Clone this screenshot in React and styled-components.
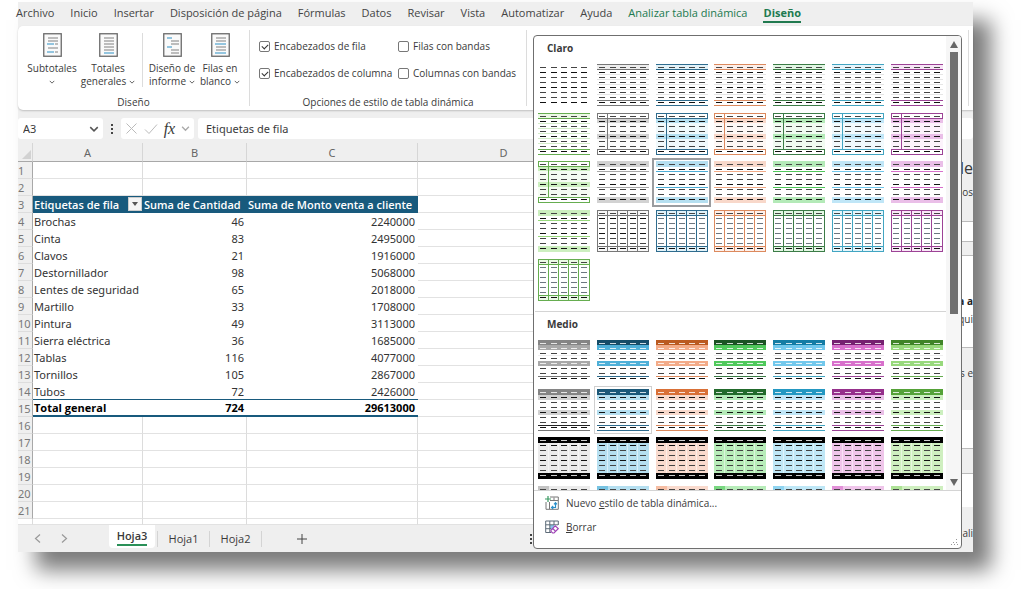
import React, { useState } from "react";
import styled, { createGlobalStyle, css } from "styled-components";

const GlobalStyle = createGlobalStyle`
    * {
        box-sizing: border-box;
    }

    body {
        margin: 0;
        background: #fff;
        color: #3a3a3a;
        font-family: "Open Sans", "Noto Sans", sans-serif;
        font-size: 10px;
    }

    button, input {
        font: inherit;
        color: inherit;
    }

    button {
        background: none;
        border: none;
        padding: 0;
    }
`;

const Page = styled.div`
    display: flex;
    min-height: 100vh;
    padding: 2px 51px 37px 18px;
    overflow: hidden;
`;

const Window = styled.div`
    position: relative;
    flex: 1;
    min-width: 0;
    display: flex;
    flex-direction: column;
    background: #efefef;
    box-shadow: 18px 18px 20px rgba(0, 0, 0, 0.52);
`;

/* Pestañas de la cinta */
const TabBar = styled.nav`
    display: flex;
    gap: 16px;
    height: 24px;
    margin-left: -2px;
    white-space: nowrap;
`;

const RibbonTab = styled.a`
    font-size: 11px;
    line-height: 20px;
    height: 21px;
    padding-top: 1px;
    text-decoration: none;
    color: ${({ $green }) => ($green ? "#217a50" : "#444")};
    ${({ $active }) =>
        $active &&
        css`
            font-weight: 700;
            border-bottom: 2px solid #217a50;
        `}
`;

const Ribbon = styled.div`
    display: flex;
    height: 84px;
    padding: 4px 0;
    background: #fff;
    border-radius: 5px 0 0 5px;
    box-shadow: 0 1px 2px rgba(0, 0, 0, 0.2);
`;

const Group = styled.section`
    display: flex;
    flex-direction: column;
    justify-content: space-between;
    width: ${({ $width }) => $width};
    flex: ${({ $grow }) => ($grow ? "1" : "none")};
    border-right: 1px solid #dcdcdc;
    margin-right: ${({ $grow }) => ($grow ? "4px" : "0")};
`;

const GroupBody = styled.div`
    display: flex;
    padding: 3px 5px 0 6px;
`;

const GroupLabel = styled.div`
    text-align: center;
    line-height: 14px;
    margin-bottom: -3px;
`;

const BigButton = styled.button`
    display: flex;
    flex-direction: column;
    align-items: center;
    width: ${({ $wide }) => ($wide ? "56px" : "48px")};
    line-height: 13px;
    white-space: nowrap;

    > svg {
        margin-bottom: 5px;
    }
`;

const ButtonLine = styled.span`
    display: flex;
    align-items: center;
    gap: 3px;
    height: 13px;
`;

const Divider = styled.span`
    width: 1px;
    height: 54px;
    margin: 0 5px 0 6px;
    background: #dcdcdc;
`;

const Options = styled.div`
    display: grid;
    grid-template-columns: 139px auto;
    row-gap: 13px;
    padding: 9px 0 0 9px;
`;

const Option = styled.label`
    display: flex;
    align-items: center;
    gap: 4px;
    line-height: 14px;
    white-space: nowrap;
`;

const Check = styled.input`
    appearance: none;
    width: 11px;
    height: 11px;
    margin: 0;
    border: 1px solid #777;
    border-radius: 2px;
    display: grid;
    place-items: center;

    &:checked::before {
        content: "";
        width: 5px;
        height: 3px;
        margin-bottom: 1px;
        border-left: 1px solid #333;
        border-bottom: 1px solid #333;
        transform: rotate(-45deg);
    }
`;

/* Barra de fórmulas */
const FormulaBar = styled.div`
    display: flex;
    gap: 4px;
    padding: 8px 0 4px;
`;

const Field = styled.div`
    display: flex;
    align-items: center;
    justify-content: space-between;
    height: 21px;
    padding: 0 4px;
    background: #fff;
    border-radius: 3px;
    width: ${({ $width }) => $width || "auto"};
    flex: ${({ $grow }) => ($grow ? "1" : "none")};
    min-width: 0;
`;

const FieldInput = styled.input`
    flex: 1;
    min-width: 0;
    border: none;
    background: none;
    padding: 0 0 0 ${({ $indent }) => ($indent ? "4px" : "1px")};
    font-family: "Noto Sans", sans-serif;
    font-size: 11px;
    outline: none;
`;

const Fx = styled.button`
    font: italic 16px/20px "Liberation Serif", serif;
`;

const Dots = styled.span`
    align-self: center;
    width: 10px;
    display: flex;
    justify-content: center;
`;

/* Hoja */
const Workspace = styled.div`
    display: flex;
    flex: 1;
    min-height: 0;
`;

const SheetColumn = styled.div`
    flex: 1;
    min-width: 0;
    display: flex;
    flex-direction: column;
`;

const Sheet = styled.table`
    width: 100%;
    table-layout: fixed;
    border-collapse: separate;
    border-spacing: 0;
    font-family: "Noto Sans", sans-serif;
    font-size: 11px;
    background: #fff;
`;

const ColHead = styled.th`
    height: 19px;
    padding: 0;
    font-weight: 400;
    color: #666;
    background: #efefef;
    border-right: 1px solid #d6d6d6;
    border-bottom: 1px solid #a8a8a8;
    text-align: ${({ $corner }) => ($corner ? "right" : "center")};
    vertical-align: ${({ $corner }) => ($corner ? "bottom" : "middle")};
    line-height: 1;
`;

const RowHead = styled.th`
    height: 17px;
    padding: 0;
    overflow: hidden;
    font-weight: 400;
    line-height: 15px;
    text-align: left;
    color: #777;
    background: #efefef;
    border-right: 1px solid #a8a8a8;
    border-bottom: 1px solid #ddd;
`;

const Cell = styled.td`
    height: ${({ $partial }) => ($partial ? "6px" : "17px")};
    padding: 0 2px 0 1px;
    line-height: 15px;
    white-space: nowrap;
    color: #333;
    text-align: ${({ $number }) => ($number ? "right" : "left")};
    border-right: 1px solid #dcdcdc;
    border-bottom: 1px solid #e2e2e2;
    ${({ $kind }) =>
        $kind === "data" &&
        css`
            border-color: #fff;
        `}
    ${({ $kind }) =>
        $kind === "head" &&
        css`
            background: #185a7d;
            border-color: #185a7d;
            color: #fff;
            font-family: "Open Sans", sans-serif;
            font-weight: 600;
            padding-right: 0;
        `}
    ${({ $kind }) =>
        $kind === "last" &&
        css`
            border-right: none;
            padding-right: 3px;
            border-bottom-color: #185a7d;
        `}
    ${({ $kind }) =>
        $kind === "total" &&
        css`
            border-right: none;
            padding-right: 3px;
            border-bottom: 2px solid #185a7d;
            color: #000;
            font-family: "Open Sans", sans-serif;
            font-weight: 700;
        `}
`;

const HeadContent = styled.div`
    display: flex;
    align-items: center;
    justify-content: space-between;
    height: 15px;
`;

const FilterButton = styled.button`
    display: grid;
    place-items: center;
    width: 14px;
    height: 14px;
    background: #f4f4f4;
    border: 1px solid #ccc;
`;

const SheetTabs = styled.div`
    display: flex;
    align-items: stretch;
    height: 27px;
    margin-top: auto;
    font-size: 11px;
`;

const NavButtons = styled.div`
    display: flex;
    align-items: center;
    gap: 16px;
    width: 91px;
    padding-left: 14px;
`;

const SheetTab = styled.button`
    display: flex;
    align-items: center;
    justify-content: center;
    width: ${({ $active }) => ($active ? "46px" : "51px")};
    margin-right: ${({ $active }) => ($active ? "2px" : "0")};
    margin-bottom: ${({ $active }) => ($active ? "4px" : "0")};
    background: ${({ $active }) => ($active ? "#fff" : "none")};
    border-radius: 0 0 4px 4px;
    font-weight: ${({ $active }) => ($active ? "600" : "400")};

    span {
        line-height: 16px;
        border-bottom: ${({ $active }) => ($active ? "2px solid #2a9058" : "none")};
    }
`;

const TabRule = styled.span`
    width: 1px;
    margin: 6px 0 5px;
    background: #d4d4d4;
`;

const AddSheet = styled.button`
    width: 80px;
    margin-right: auto;
    display: grid;
    place-items: center;
`;

const TabDots = styled.div`
    flex: 1;
    display: flex;
    align-items: center;
    padding-left: 188px;
`;

/* Panel lateral, casi oculto bajo la galería */
const SidePane = styled.aside`
    width: 32px;
    text-align: right;
    white-space: nowrap;
`;

const PaneBlock = styled.div`
    height: ${({ $height }) => $height};
    padding-top: ${({ $top }) => $top || "0"};
    background: ${({ $white }) => ($white ? "#fff" : "#efefef")};
    border-bottom: 1px solid ${({ $line }) => ($line ? "#bbb" : "transparent")};
    font-size: 10px;
    line-height: 18px;
`;

const PaneTitle = styled.div`
    font-size: 16px;
    line-height: 30px;
`;

const Strong = styled.strong`
    display: block;
    color: #222;
`;

/* Galería de estilos */
const Gallery = styled.div`
    position: absolute;
    top: 33px;
    right: 11px;
    bottom: 3px;
    width: 429px;
    display: flex;
    flex-direction: column;
    background: #fff;
    border: 1px solid #6f6f6f;
    border-radius: 4px;
    overflow: hidden;
`;

const GalleryScroll = styled.div`
    display: flex;
    flex: 1;
    min-height: 0;
    border-bottom: 1px solid #d4d4d4;
`;

const GalleryList = styled.div`
    flex: 1;
    overflow: hidden;
    padding-left: 1px;
`;

const GallerySection = styled.section`
    padding-bottom: 7px;
    border-bottom: 1px solid #d4d4d4;
`;

const SectionTitle = styled.h2`
    margin: 0;
    padding-left: 12px;
    font-size: 10px;
    font-weight: 700;
    line-height: 25px;
`;

const StyleGrid = styled.div`
    display: grid;
    grid-template-columns: repeat(7, 1fr);
    grid-auto-rows: 1fr;
    height: ${({ $height }) => $height};
`;

const StyleButton = styled.button`
    display: grid;
    place-items: center;
    border: ${({ $state }) =>
        $state === "selected"
            ? "2px solid #9a9c9f"
            : $state === "hover"
              ? "1px solid #cfcfcf"
              : "1px solid transparent"};
`;

const ScrollTrack = styled.div`
    width: 15px;
    display: flex;
    flex-direction: column;
    align-items: center;
    padding: 5px 0 4px;
    background: #f6f6f6;
`;

const ScrollThumb = styled.div`
    width: 8px;
    height: 262px;
    margin: 4px 0 auto;
    background: #707070;
`;

const GalleryMenu = styled.div`
    display: flex;
    flex-direction: column;
    height: 57px;
    padding: 0 11px;
`;

const MenuItem = styled.button`
    display: flex;
    align-items: center;
    gap: 7px;
    height: 24px;

    u {
        text-underline-offset: 1px;
    }
`;

const Grip = styled.svg`
    position: absolute;
    right: 2px;
    bottom: 2px;
`;

const TABS = [
    "Archivo", "Inicio", "Insertar", "Disposición de página", "Fórmulas", "Datos",
    "Revisar", "Vista", "Automatizar", "Ayuda", "Analizar tabla dinámica", "Diseño",
];

const ROWS = [
    ["Brochas", 46, 2240000],
    ["Cinta", 83, 2495000],
    ["Clavos", 21, 1916000],
    ["Destornillador", 98, 5068000],
    ["Lentes de seguridad", 65, 2018000],
    ["Martillo", 33, 1708000],
    ["Pintura", 49, 3113000],
    ["Sierra eléctrica", 36, 1685000],
    ["Tablas", 116, 4077000],
    ["Tornillos", 105, 2867000],
    ["Tubos", 72, 2426000],
];

// dark: encabezado, mid: banda, pale: relleno, line: bordes
const PALETTE = [
    { dark: "#858585", mid: "#a9a9a9", pale: "#d2d2d2", soft: "#ebebeb", line: "#777" },
    { dark: "#1c5878", mid: "#4fb0d8", pale: "#b5dff0", soft: "#b5dff0", line: "#2f6c8e" },
    { dark: "#d97037", mid: "#f3ab88", pale: "#f8d8ca", soft: "#f9dacd", line: "#dc8a5e" },
    { dark: "#226a2c", mid: "#50c95c", pale: "#b4eab8", soft: "#b7ecb9", line: "#3c7c47" },
    { dark: "#2498c2", mid: "#72c8ec", pale: "#c0e6f7", soft: "#bfe7f6", line: "#42a5c2" },
    { dark: "#96308c", mid: "#d870cc", pale: "#eabfe8", soft: "#efc5ea", line: "#9c4396" },
    { dark: "#55a238", mid: "#98d97c", pale: "#ccefbf", soft: "#cfefc0", line: "#66ad50" },
];
const HEAD_DARK = ["#858585", "#154c68", "#bb5a20", "#1b5324", "#147ca4", "#762070", "#408528"];

const DASH_Y = [3, 8, 13, 18, 23, 28, 33, 38];
const DASH_X = [2, 13, 23, 33, 43];

function Dashes({ light = [], tint }) {
    return DASH_Y.map((y, r) =>
        DASH_X.map((x) => (
            <rect
                key={`${r}-${x}`}
                x={x}
                y={y}
                width="6"
                height="1"
                fill={light.includes(r) ? "#ffffffcc" : tint && r > 0 && r < 7 ? tint : r % 3 === 1 ? "#111" : "#444"}
            />
        ))
    );
}

function Thumb({ kind, c }) {
    const p = PALETTE[c];
    const fill = (y, h, color) => <rect x="0" y={y} width="52" height={h} fill={color} />;
    const hline = (y, color = p.line) => <rect x="0" y={y} width="52" height="1" fill={color} />;
    return (
        <svg width="52" height="42" viewBox="0 0 52 42" shapeRendering="crispEdges" aria-hidden="true">
            {kind === "plain" && <Dashes />}
            {kind === "lines" && (
                <>
                    {fill(0, 6, p.pale + "66")}
                    {[10, 15, 20, 25, 30].map((y) => (
                        <g key={y}>{hline(y, c === 6 ? "#d3ecc8" : "#e6e6e6")}</g>
                    ))}
                    {hline(0)}
                    {hline(5)}
                    {hline(36)}
                    {hline(41)}
                    <Dashes />
                </>
            )}
            {kind === "boxed" && (
                <>
                    {fill(6, 30, p.soft + "33")}
                    {fill(6, 4, p.pale)}
                    {fill(21, 5, p.pale)}
                    <Dashes />
                    <g fill="none" stroke={p.line}>
                        <rect x="0.5" y="0.5" width="51" height="5" />
                        <rect x="0.5" y="36.5" width="51" height="5" />
                        <path d="M10.5 0V36" />
                    </g>
                </>
            )}
            {kind === "bands" && (
                <>
                    {fill(0, 6, p.pale)}
                    {fill(36, 6, p.pale)}
                    {hline(10, p.mid)}
                    {hline(26, p.mid)}
                    <Dashes />
                </>
            )}
            {kind === "grid" && (
                <>
                    {fill(0, 6, p.soft + "66")}
                    {fill(36, 6, p.soft + "66")}
                    <Dashes tint={c === 0 ? undefined : "#6c7780"} />
                    <g fill="none" stroke={p.line}>
                        <rect x="0.5" y="0.5" width="51" height="41" />
                        <path d="M0 5.5H52M0 36.5H52M10.5 0V42M20.5 0V42M30.5 0V42M40.5 0V42" />
                    </g>
                </>
            )}
            {kind === "strong" && (
                <>
                    {fill(0, 5, HEAD_DARK[c])}
                    {fill(5, 5, p.mid)}
                    {fill(21, 5, p.mid)}
                    {hline(15, "#eee")}
                    {hline(36)}
                    <Dashes light={[0, 1, 4]} />
                </>
            )}
            {kind === "medium" && (
                <>
                    {fill(0, 6, p.dark)}
                    {fill(6, 5, p.pale)}
                    {fill(21, 5, p.pale)}
                    {hline(36, c === 0 ? "#222" : p.line)}
                    {hline(41)}
                    <Dashes light={[0]} />
                </>
            )}
            {kind === "black" && (
                <>
                    {fill(0, 42, p.soft)}
                    <path d="M10.5 0V42M20.5 0V42M30.5 0V42M40.5 0V42" stroke="#fff" strokeOpacity="0.5" />
                    {fill(0, 6, "#000")}
                    {fill(36, 6, "#000")}
                    <Dashes light={[0, 7]} />
                </>
            )}
            {kind === "tinted" && (
                <>
                    {fill(0, 42, p.soft)}
                    <rect x="0" y="0" width="11" height="42" fill={p.mid} fillOpacity="0.6" />
                    <Dashes />
                </>
            )}
        </svg>
    );
}

const series = (kind) => PALETTE.map((_, c) => ({ kind, c }));
const LIGHT = [{ kind: "plain", c: 0 }, ...series("lines"), ...series("boxed"), ...series("bands"), ...series("grid")];
const MEDIUM = [...series("strong"), ...series("medium"), ...series("black"), ...series("tinted")];

const Chevron = ({ size = 6, color = "#555" }) => (
    <svg width={size} height={size} viewBox="0 0 8 8" fill="none" stroke={color} strokeWidth="1.2" aria-hidden="true">
        <path d="M1 2.5 4 5.5 7 2.5" />
    </svg>
);

// Cada línea: [y, x1, x2, azul]
const DOC_LINES = {
    subtotals: [[5, 5, 15], [8, 5, 15], [11, 4, 11, true], [11, 12, 15], [15, 5, 15], [19, 4, 11, true], [19, 12, 15]],
    totals: [[5, 5, 15], [8, 5, 15], [11, 5, 15], [14, 5, 15], [17, 5, 15], [20, 5, 15, true]],
    report: [[5, 4, 9, true], [8, 8, 16], [11, 8, 16], [14, 4, 9, true], [17, 8, 16], [20, 8, 16]],
    blank: [[5, 5, 15], [8, 5, 15], [11, 4, 15, true], [14, 5, 15], [17, 5, 15], [20, 4, 15, true]],
};

function DocIcon({ type }) {
    return (
        <svg width="19" height="24" viewBox="0 0 19 24" fill="none" aria-hidden="true">
            <rect x="0.75" y="0.75" width="17.5" height="22.5" fill="#fafafa" stroke="#6a6a6a" strokeWidth="1.3" />
            {DOC_LINES[type].map(([y, a, b, blue], i) => (
                <path key={i} d={`M${a} ${y}H${b}`} stroke={blue ? "#3f9ac9" : "#8a8a8a"} strokeWidth="1.1" />
            ))}
        </svg>
    );
}

const DotsIcon = () => (
    <svg width="2" height="10" viewBox="0 0 2 10" fill="#444" aria-hidden="true">
        <path d="M0 0H2V2H0ZM0 4H2V6H0ZM0 8H2V10H0Z" />
    </svg>
);

const Arrow = ({ up }) => (
    <svg width="8" height="7" viewBox="0 0 8 7" fill="#666" aria-hidden="true">
        <path d={up ? "M4 0 8 7H0Z" : "M0 0H8L4 7Z"} />
    </svg>
);

const BIG_BUTTONS = [
    { icon: "subtotals", top: "Subtotales", bottom: "", wide: true },
    { icon: "totals", top: "Totales", bottom: "generales", wide: true },
    { icon: "report", top: "Diseño de", bottom: "informe" },
    { icon: "blank", top: "Filas en", bottom: "blanco" },
];

function RibbonPanel() {
    const [options, setOptions] = useState([
        ["Encabezados de fila", true],
        ["Filas con bandas", false],
        ["Encabezados de columna", true],
        ["Columnas con bandas", false],
    ]);

    const toggle = (index) =>
        setOptions(options.map(([name, on], i) => [name, i === index ? !on : on]));

    return (
        <Ribbon>
            <Group $width="232px">
                <GroupBody>
                    {BIG_BUTTONS.map((b, i) => (
                        <React.Fragment key={b.icon}>
                            {i === 2 && <Divider />}
                            <BigButton $wide={b.wide}>
                                <DocIcon type={b.icon} />
                                <ButtonLine>{b.top}</ButtonLine>
                                <ButtonLine>
                                    {b.bottom}
                                    <Chevron />
                                </ButtonLine>
                            </BigButton>
                        </React.Fragment>
                    ))}
                </GroupBody>
                <GroupLabel>Diseño</GroupLabel>
            </Group>
            <Group $width="277px">
                <Options>
                    {options.map(([name, on], i) => (
                        <Option key={name}>
                            <Check type="checkbox" checked={on} onChange={() => toggle(i)} />
                            {name}
                        </Option>
                    ))}
                </Options>
                <GroupLabel>Opciones de estilo de tabla dinámica</GroupLabel>
            </Group>
            <Group $grow />
        </Ribbon>
    );
}

function SheetRow({ n }) {
    if (n === 3) {
        return (
            <tr>
                <RowHead scope="row">3</RowHead>
                <Cell $kind="head">
                    <HeadContent>
                        Etiquetas de fila
                        <FilterButton aria-label="Filtrar">
                            <svg width="6" height="4" viewBox="0 0 6 4" fill="#555">
                                <path d="M0 0H6L3 4Z" />
                            </svg>
                        </FilterButton>
                    </HeadContent>
                </Cell>
                <Cell $kind="head">Suma de Cantidad</Cell>
                <Cell $kind="head">Suma de Monto venta a cliente</Cell>
                <Cell />
                <Cell />
            </tr>
        );
    }
    const row = n === 15 ? ["Total general", 724, 29613000] : ROWS[n - 4] || ["", "", ""];
    const kind = n === 15 ? "total" : n === 14 ? "last" : n > 3 && n < 14 ? "data" : undefined;
    return (
        <tr>
            <RowHead scope="row">{n}</RowHead>
            <Cell $kind={kind}>{row[0]}</Cell>
            <Cell $kind={kind} $number>{row[1]}</Cell>
            <Cell $kind={kind} $number>{row[2]}</Cell>
            <Cell />
            <Cell />
        </tr>
    );
}

function StyleGallery() {
    return (
        <Gallery>
            <GalleryScroll>
                <GalleryList>
                    <GallerySection>
                        <SectionTitle>Claro</SectionTitle>
                        <StyleGrid $height="243px">
                            {LIGHT.map((s, i) => (
                                <StyleButton key={i} aria-label={`Claro ${i}`} $state={i === 16 ? "selected" : ""}>
                                    <Thumb {...s} />
                                </StyleButton>
                            ))}
                        </StyleGrid>
                    </GallerySection>
                    <GallerySection>
                        <SectionTitle>Medio</SectionTitle>
                        <StyleGrid $height="194px">
                            {MEDIUM.map((s, i) => (
                                <StyleButton key={i} aria-label={`Medio ${i + 1}`} $state={i === 8 ? "hover" : ""}>
                                    <Thumb {...s} />
                                </StyleButton>
                            ))}
                        </StyleGrid>
                    </GallerySection>
                </GalleryList>
                <ScrollTrack>
                    <Arrow up />
                    <ScrollThumb />
                    <Arrow />
                </ScrollTrack>
            </GalleryScroll>
            <GalleryMenu>
                <MenuItem>
                    <svg width="14" height="14" viewBox="0 0 14 14" fill="none" aria-hidden="true">
                        <path d="M5 1H13.3V13.3H1V6M5 4.5H13M4.5 6V13M9 1.5V4" stroke="#777" />
                        <path d="M3 0V6M0 3H6" stroke="#3a9a62" strokeWidth="1.2" />
                        <path d="M7 11.5H10.5V7M9 8.3 10.5 6.7 12 8.3M8.2 10 6.6 11.5 8.2 13" stroke="#2a8fc9" strokeWidth="1.2" />
                    </svg>
                    <span>Nuevo <u>e</u>stilo de tabla dinámica...</span>
                </MenuItem>
                <MenuItem>
                    <svg width="14" height="14" viewBox="0 0 14 14" fill="none" aria-hidden="true">
                        <rect x="5" y="5" width="4" height="4" fill="#8cc5ea" />
                        <path d="M6 12.5H0.7V1H13.3V5M0.7 4.8H13M0.7 8.7H6M4.8 1V12.5M9 1V5" stroke="#5d6b78" />
                        <path d="M6 10.2 10.2 5.8 13.2 8.6 9 13H7.6L6 11.5ZM7.8 8.5 10.6 11.3" fill="#fff" stroke="#a146b8" strokeWidth="1.2" />
                    </svg>
                    <span><u>B</u>orrar</span>
                </MenuItem>
            </GalleryMenu>
            <Grip width="8" height="8" viewBox="0 0 8 8" fill="#999" aria-hidden="true">
                <path d="M5 1H6V2H5ZM2 4H3V5H2ZM5 4H6V5H5ZM0 6H1V7H0ZM3 6H4V7H3ZM6 6H7V7H6Z" />
            </Grip>
        </Gallery>
    );
}

function App() {
    return (
        <Page>
            <GlobalStyle />
            <Window>
                <TabBar>
                    {TABS.map((tab, i) => (
                        <RibbonTab key={tab} href="#" $green={i > 9} $active={i === 11}>
                            {tab}
                        </RibbonTab>
                    ))}
                </TabBar>
                <RibbonPanel />
                <FormulaBar>
                    <Field $width="85px">
                        <FieldInput aria-label="Cuadro de nombres" defaultValue="A3" />
                        <Chevron size={10} />
                    </Field>
                    <Dots>
                        <DotsIcon />
                    </Dots>
                    <Field $width="73px">
                        <svg width="13" height="13" viewBox="0 0 13 13" stroke="#bbb" aria-hidden="true">
                            <path d="M1.5 1.5 11.5 11.5M11.5 1.5 1.5 11.5" />
                        </svg>
                        <svg width="14" height="12" viewBox="0 0 14 12" fill="none" stroke="#bbb" aria-hidden="true">
                            <path d="M1 6.5 5 10.5 13 1.5" />
                        </svg>
                        <Fx>fx</Fx>
                        <Chevron size={9} color="#aaa" />
                    </Field>
                    <Field $grow>
                        <FieldInput aria-label="Barra de fórmulas" $indent defaultValue="Etiquetas de fila" />
                    </Field>
                </FormulaBar>
                <Workspace>
                    <SheetColumn>
                        <Sheet>
                            <colgroup>
                                <col width="15" />
                                <col width="110" />
                                <col width="104" />
                                <col width="171" />
                                <col width="172" />
                                <col />
                            </colgroup>
                            <thead>
                                <tr>
                                    <ColHead $corner>
                                        <svg width="10" height="10" viewBox="0 0 10 10" fill="#d2d2d2" aria-hidden="true">
                                            <path d="M9 0V9H0Z" />
                                        </svg>
                                    </ColHead>
                                    <ColHead>A</ColHead>
                                    <ColHead>B</ColHead>
                                    <ColHead>C</ColHead>
                                    <ColHead>D</ColHead>
                                    <ColHead>E</ColHead>
                                </tr>
                            </thead>
                            <tbody>
                                {Array.from({ length: 21 }, (_, i) => (
                                    <SheetRow key={i} n={i + 1} />
                                ))}
                                <tr>
                                    {Array.from({ length: 6 }, (_, i) => (
                                        <Cell key={i} $partial />
                                    ))}
                                </tr>
                            </tbody>
                        </Sheet>
                        <SheetTabs>
                            <NavButtons>
                                <svg width="11" height="11" viewBox="0 0 11 11" fill="none" stroke="#999" strokeWidth="1.2">
                                    <path d="M8 1.5 3.5 5.5 8 9.5" />
                                </svg>
                                <svg width="11" height="11" viewBox="0 0 11 11" fill="none" stroke="#999" strokeWidth="1.2">
                                    <path d="M3 1.5 7.5 5.5 3 9.5" />
                                </svg>
                            </NavButtons>
                            <SheetTab $active><span>Hoja3</span></SheetTab>
                            <TabRule />
                            <SheetTab><span>Hoja1</span></SheetTab>
                            <TabRule />
                            <SheetTab><span>Hoja2</span></SheetTab>
                            <TabRule />
                            <AddSheet aria-label="Hoja nueva">
                                <svg width="10" height="10" viewBox="0 0 10 10" stroke="#444">
                                    <path d="M5 0V10M0 5H10" />
                                </svg>
                            </AddSheet>
                            <TabDots>
                                <DotsIcon />
                            </TabDots>
                        </SheetTabs>
                    </SheetColumn>
                    <SidePane>
                        <PaneBlock $height="79px" $line $top="10px">
                            <PaneTitle>le</PaneTitle>
                            pos
                        </PaneBlock>
                        <PaneBlock $height="20px" $white $line />
                        <PaneBlock $height="14px" $line />
                        <PaneBlock $height="92px" $white $line $top="36px">
                            <Strong>a a</Strong>
                            qui
                        </PaneBlock>
                        <PaneBlock $height="62px" $top="16px">s e</PaneBlock>
                        <PaneBlock $height="39px" $white $line />
                        <PaneBlock $height="25px" $line />
                        <PaneBlock $height="33px" $white />
                        <PaneBlock $height="45px" $top="17px">ali</PaneBlock>
                    </SidePane>
                </Workspace>
                <StyleGallery />
            </Window>
        </Page>
    );
}

export default App;
